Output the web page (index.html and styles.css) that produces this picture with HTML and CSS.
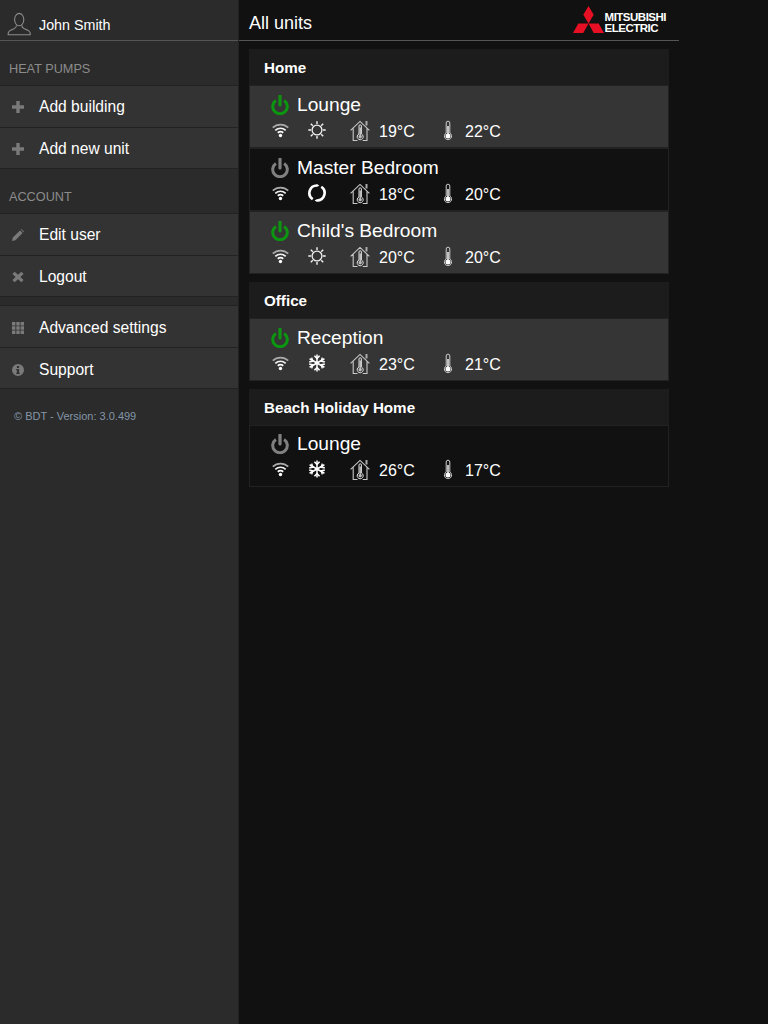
FILE: index.html
```html
<!DOCTYPE html>
<html lang="en">
<head>
<meta charset="utf-8">
<title>All units</title>
<link rel="stylesheet" href="styles.css">
</head>
<body>
<svg class="defs" width="0" height="0" aria-hidden="true">
  <symbol id="power" viewBox="0 0 18 20">
    <path d="M4.900 5.400a7.300 7.300 0 1 0 8.200 0" fill="none" stroke="currentColor" stroke-width="3"/>
    <path d="M9 1v9" fill="none" stroke="currentColor" stroke-width="3.200" stroke-linecap="round"/>
  </symbol>
  <symbol id="wifi" viewBox="0 0 18 16">
    <path d="M.8 5.600C5.400 1.200 12.600 1.200 17.200 5.600" fill="none" stroke="#aaa" stroke-width="1.800"/>
    <path d="M3.500 8.300C6.700 5.400 11.300 5.400 14.500 8.300" fill="none" stroke="#f2f2f2" stroke-width="1.800"/>
    <path d="M6.100 10.900C7.900 9.400 10.100 9.400 11.900 10.900" fill="none" stroke="#fff" stroke-width="1.800"/>
    <circle cx="9" cy="13.800" r="1.800" fill="#fff"/>
  </symbol>
  <symbol id="sun" viewBox="0 0 18 18">
    <circle cx="9" cy="9" r="4.900" fill="none" stroke="#f2f2f2" stroke-width="1.300"/>
    <path d="M9 .3v2.800M9 14.900v2.800M.3 9h2.800M14.900 9h2.800M2.800 2.800l2 2M13.200 13.200l2 2M15.200 2.800l-2 2M4.800 13.200l-2 2" fill="none" stroke="#f2f2f2" stroke-width="1.400"/>
  </symbol>
  <symbol id="snow" viewBox="0 0 18 18">
    <g fill="none" stroke="#fff" stroke-width="1.500">
      <path d="M9 .5v17M1.600 4.750l14.800 8.500M16.400 4.750L1.600 13.250"/>
      <path d="M6.400 1.800L9 4.400l2.600-2.600M6.400 16.200L9 13.600l2.600 2.600M1.200 8l3.500-.9-1-3.500M16.800 8l-3.500-.9 1-3.500M1.200 10l3.500.9-1 3.500M16.800 10l-3.500.9 1 3.500"/>
    </g>
  </symbol>
  <symbol id="sync" viewBox="0 0 18 18">
    <path d="M9 1.500A7.500 7.500 0 0 0 4.700 15.200" fill="none" stroke="#fff" stroke-width="2.600"/>
    <path d="M13.300 2.800A7.500 7.500 0 0 1 9 16.500" fill="none" stroke="#fff" stroke-width="2.600"/>
    <path d="M8.800 0l2.600 1.500-2.600 1.500zM9.200 15l-2.600 1.500 2.600 1.500z" fill="#fff"/>
  </symbol>
  <symbol id="house" viewBox="0 0 21 21">
    <path d="M.6 10.400L10 1.400l9.400 9M3.200 8.500v12h4.300M17 8.500v12h-4.300" fill="none" stroke="#c8c8c8" stroke-width="1.100"/>
    <path d="M9 14V6a1.200 1.200 0 0 1 2.400 0v8a3 3 0 1 1-2.400 0z" fill="none" stroke="#e0e0e0" stroke-width="1"/>
    <circle cx="10.200" cy="16.700" r="1.700" fill="#bbb"/>
    <path d="M10.200 7.500v8" stroke="#ddd" stroke-width="1.200"/>
    <path d="M16.500 1v4.500" stroke="#aaa" stroke-width="2" fill="none"/>
  </symbol>
  <symbol id="therm" viewBox="0 0 10 20">
    <path d="M3.200 13V3a1.800 1.800 0 0 1 3.600 0v10a3.600 3.600 0 1 1-3.600 0z" fill="none" stroke="#ccc" stroke-width="1"/>
    <path d="M5 6v9" stroke="#fff" stroke-width="1.400"/>
    <circle cx="5" cy="16" r="2.500" fill="#fff"/>
  </symbol>
</svg>

<div class="app">
  <aside class="sidebar">
    <div class="user">
      <svg class="user-icon" viewBox="0 0 24 24" width="24" height="24" aria-hidden="true">
        <path d="M7.600 7.600a4.600 6.200 0 1 1 9.200 0a4.600 6.200 0 1 1-9.200 0zM9.400 13.400c.2 1.500-.4 2.500-2 3.200C4.500 17.700 1.200 18.600 1.200 21.300v1.500h22v-1.500c0-2.700-3.300-3.600-6.200-4.700-1.600-.7-2.200-1.700-2-3.200" fill="none" stroke="#8c8c8c" stroke-width="1.100"/>
      </svg>
      <span>John Smith</span>
    </div>

    <h2 class="section-label">HEAT PUMPS</h2>
    <ul class="menu">
      <li class="menu-item">
        <svg class="menu-icon" viewBox="0 0 12 12" aria-hidden="true"><path d="M4.300 0h3.400v4.300H12v3.400H7.700V12H4.300V7.700H0V4.300h4.300z"/></svg>
        <span>Add building</span>
      </li>
      <li class="menu-item">
        <svg class="menu-icon" viewBox="0 0 12 12" aria-hidden="true"><path d="M4.300 0h3.400v4.300H12v3.400H7.700V12H4.300V7.700H0V4.300h4.300z"/></svg>
        <span>Add new unit</span>
      </li>
    </ul>

    <h2 class="section-label">ACCOUNT</h2>
    <ul class="menu">
      <li class="menu-item">
        <svg class="menu-icon" viewBox="0 0 12 12" aria-hidden="true"><path d="M0 12l.8-3.400L8 1.400 10.600 4 3.400 11.200zM8.800.6l.6-.6L12 2.600l-.6.600z"/></svg>
        <span>Edit user</span>
      </li>
      <li class="menu-item">
        <svg class="menu-icon" viewBox="0 0 12 12" aria-hidden="true"><path d="M2.600.8L6 3.800 9.400.8l2.200 2.200L8.400 6l3.200 3-2.200 2.200L6 8.200l-3.400 3L.4 9l3.200-3L.4 3z"/></svg>
        <span>Logout</span>
      </li>
    </ul>

    <ul class="menu menu-extra">
      <li class="menu-item">
        <svg class="menu-icon" viewBox="0 0 12 12" aria-hidden="true"><path d="M0 0h3.400v3.400H0zM4.300 0h3.400v3.400H4.300zM8.600 0H12v3.400H8.600zM0 4.300h3.400v3.400H0zM4.300 4.300h3.400v3.400H4.300zM8.600 4.300H12v3.400H8.600zM0 8.600h3.400V12H0zM4.300 8.600h3.400V12H4.300zM8.600 8.600H12V12H8.600z"/></svg>
        <span>Advanced settings</span>
      </li>
      <li class="menu-item">
        <svg class="menu-icon" viewBox="0 0 12 12" aria-hidden="true"><path fill-rule="evenodd" d="M6 0a6 6 0 1 1 0 12A6 6 0 0 1 6 0zM4.900 2v2h2.200V2zM4.200 5v1.200h.7v2.500h-.7V10h3.600V8.700h-.7V5z"/></svg>
        <span>Support</span>
      </li>
    </ul>

    <p class="version">© BDT - Version: 3.0.499</p>
  </aside>

  <main class="main">
    <header class="topbar">
      <h1>All units</h1>
      <div class="logo">
        <svg viewBox="0 0 31 27" width="31" height="27" aria-hidden="true">
          <path fill="#e60f23" d="M15.500 0L20.700 8.800 15.500 17.500 10.300 8.800zM15.500 17.500L10.300 27H0L5.300 17.500zM15.500 17.500H25.700L31 27H20.700z"/>
        </svg>
        <div class="logo-text">MITSUBISHI<br>ELECTRIC</div>
      </div>
    </header>

    <section class="building">
      <h2>Home</h2>
      <div class="unit on">
        <div class="unit-name"><svg class="power"><use href="#power"/></svg><span>Lounge</span></div>
        <div class="unit-status">
          <svg class="i-wifi"><use href="#wifi"/></svg>
          <svg class="i-mode"><use href="#sun"/></svg>
          <svg class="i-house"><use href="#house"/></svg><span class="temp">19°C</span>
          <svg class="i-therm"><use href="#therm"/></svg><span>22°C</span>
        </div>
      </div>
      <div class="unit off">
        <div class="unit-name"><svg class="power"><use href="#power"/></svg><span>Master Bedroom</span></div>
        <div class="unit-status">
          <svg class="i-wifi"><use href="#wifi"/></svg>
          <svg class="i-mode"><use href="#sync"/></svg>
          <svg class="i-house"><use href="#house"/></svg><span class="temp">18°C</span>
          <svg class="i-therm"><use href="#therm"/></svg><span>20°C</span>
        </div>
      </div>
      <div class="unit on">
        <div class="unit-name"><svg class="power"><use href="#power"/></svg><span>Child's Bedroom</span></div>
        <div class="unit-status">
          <svg class="i-wifi"><use href="#wifi"/></svg>
          <svg class="i-mode"><use href="#sun"/></svg>
          <svg class="i-house"><use href="#house"/></svg><span class="temp">20°C</span>
          <svg class="i-therm"><use href="#therm"/></svg><span>20°C</span>
        </div>
      </div>
    </section>

    <section class="building">
      <h2>Office</h2>
      <div class="unit on">
        <div class="unit-name"><svg class="power"><use href="#power"/></svg><span>Reception</span></div>
        <div class="unit-status">
          <svg class="i-wifi"><use href="#wifi"/></svg>
          <svg class="i-mode"><use href="#snow"/></svg>
          <svg class="i-house"><use href="#house"/></svg><span class="temp">23°C</span>
          <svg class="i-therm"><use href="#therm"/></svg><span>21°C</span>
        </div>
      </div>
    </section>

    <section class="building">
      <h2>Beach Holiday Home</h2>
      <div class="unit off">
        <div class="unit-name"><svg class="power"><use href="#power"/></svg><span>Lounge</span></div>
        <div class="unit-status">
          <svg class="i-wifi"><use href="#wifi"/></svg>
          <svg class="i-mode"><use href="#snow"/></svg>
          <svg class="i-house"><use href="#house"/></svg><span class="temp">26°C</span>
          <svg class="i-therm"><use href="#therm"/></svg><span>17°C</span>
        </div>
      </div>
    </section>
  </main>
</div>
</body>
</html>
```

FILE: styles.css
```css
* { box-sizing: border-box; }
html, body { margin: 0; height: 100%; }
body {
  background: #111;
  color: #fff;
  font-family: "Liberation Sans", Arial, sans-serif;
  overflow: hidden;
}
.defs { position: absolute; }
.app { display: flex; height: 1024px; }

.sidebar {
  width: 239px;
  flex: none;
  background: #2b2b2b;
  border-right: 1px solid #222;
}
.user {
  height: 41px;
  display: flex;
  align-items: center;
  gap: 8px;
  padding: 10px 0 0 7px;
  border-bottom: 1px solid #555;
  font-size: 14.300px;
}
.user-icon { flex: none; margin-top: -2px; }
.section-label {
  margin: 0;
  height: 44px;
  padding: 21px 0 0 9px;
  font-size: 12.700px;
  line-height: 15px;
  font-weight: 400;
  color: #8c8c8c;
}
.menu {
  list-style: none;
  margin: 0;
  padding: 0;
  border-top: 1px solid #222;
}
.menu-extra { margin-top: 8px; }
.menu-item {
  height: 42px;
  display: flex;
  align-items: center;
  gap: 15px;
  padding: 1px 0 0 12px;
  background: #333;
  border-bottom: 1px solid #222;
  font-size: 15.600px;
}
.menu-item:last-child { height: 41px; }
.menu-extra .menu-item { padding-top: 3px; }
.menu-icon {
  width: 12px;
  height: 12px;
  flex: none;
  fill: #7a7a7a;
}
.version {
  margin: 0;
  padding: 21px 0 0 14px;
  font-size: 11px;
  line-height: 13px;
  color: #8496a8;
}

.main {
  width: 440px;
  flex: none;
}
.topbar {
  height: 41px;
  display: flex;
  justify-content: space-between;
  align-items: center;
  padding: 0 13px 0 10px;
  border-bottom: 1px solid #555;
}
.topbar h1 {
  margin: 6px 0 0;
  font-size: 18px;
  font-weight: 400;
}
.logo {
  display: flex;
  align-items: flex-end;
  gap: 1px;
  align-self: flex-start;
  margin-top: 6px;
}
.logo-text {
  font-size: 11.500px;
  line-height: 11px;
  font-weight: 700;
  letter-spacing: -.5px;
  color: #fff;
  margin-bottom: -1px;
}

.building {
  width: 420px;
  margin: 8px 0 0 10px;
}
.building h2 {
  margin: 0;
  height: 36px;
  padding-left: 15px;
  background: #1c1c1c;
  font-size: 15.200px;
  line-height: 38px;
  font-weight: 700;
}
.unit {
  height: 63px;
  padding: 7px 0 0 21px;
  border: 1px solid #222;
}
.building:last-child .unit { height: 62px; padding-top: 6px; }
.unit.on { background: #353535; }
.unit.off { background: #111; }
.unit-name {
  display: flex;
  align-items: center;
  gap: 8px;
  height: 24px;
  font-size: 19.200px;
}
.power { width: 18px; height: 20px; flex: none; }
.on .power { color: #0c9510; }
.off .power { color: #808080; }
.unit-status {
  display: flex;
  align-items: center;
  height: 24px;
  margin-top: 3px;
  font-size: 16px;
}
.unit-status svg { flex: none; margin-bottom: 4px; }
.unit-status .i-wifi { width: 17px; height: 16px; margin-left: 1px; margin-right: 19px; }
.unit-status .i-mode { width: 18px; height: 18px; margin-right: 24px; }
.unit-status .i-house { width: 21px; height: 21px; margin-right: 8px; }
.temp { width: 64px; }
.unit-status .i-therm { width: 10px; height: 20px; margin-right: 12px; }
```
